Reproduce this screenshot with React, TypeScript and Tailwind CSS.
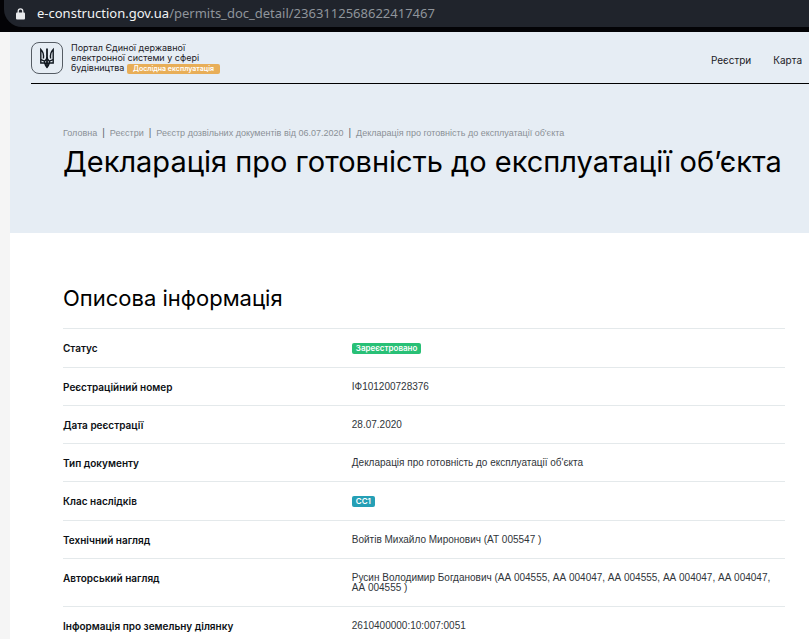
import type { ReactNode } from "react";

interface DetailRow {
  label: string;
  value: ReactNode;
}

interface BadgeProps {
  className: string;
  children: ReactNode;
}

const Badge: React.FC<BadgeProps> = ({ className, children }) => {
  return (
    <span className={`w-fit rounded-xs font-[Inter,sans-serif] text-white ${className}`}>
      {children}
    </span>
  );
};

const navigation = ["Реєстри", "Карта"];

const breadcrumbs = [
  "Головна",
  "Реєстри",
  "Реєстр дозвільних документів від 06.07.2020",
  "Декларація про готовність до експлуатації об'єкта",
];

const details: DetailRow[] = [
  {
    label: "Статус",
    value: <Badge className="block bg-[#28c076] px-1 text-[8px] leading-[11px] font-semibold">Зареєстровано</Badge>,
  },
  { label: "Реєстраційний номер", value: "ІФ101200728376" },
  { label: "Дата реєстрації", value: "28.07.2020" },
  { label: "Тип документу", value: "Декларація про готовність до експлуатації об'єкта" },
  {
    label: "Клас наслідків",
    value: <Badge className="block bg-[#259fb5] px-1 text-[8px] leading-[11px] font-semibold">СС1</Badge>,
  },
  { label: "Технічний нагляд", value: "Войтів Михайло Миронович (АТ 005547 )" },
  {
    label: "Авторський нагляд",
    value: "Русин Володимир Богданович (АА 004555, АА 004047, АА 004555, АА 004047, АА 004047, АА 004555 )",
  },
  { label: "Інформація про земельну ділянку", value: "2610400000:10:007:0051" },
];

const AddressBar: React.FC = () => {
  return (
    <div className="h-8 bg-[#030306] pl-1">
      <div className="flex h-[27px] items-center gap-3 rounded-bl-[18px] bg-[#20242c] pl-3 font-['Noto_Sans',sans-serif] text-[13px]">
        <svg className="h-3 w-[9px] shrink-0" viewBox="0 0 9 12" aria-hidden="true">
          <path d="M2.2 5V3.2a2.3 2.3 0 0 1 4.6 0V5" fill="none" stroke="#e8eaed" strokeWidth="1.3" />
          <rect y="4.4" width="9" height="7.2" rx="1" fill="#e8eaed" />
        </svg>
        <p className="whitespace-nowrap text-[#8f949b]">
          <span className="text-[#f1f3f4]">e-construction.gov.ua</span>
          /permits_doc_detail/2363112568622417467
        </p>
      </div>
    </div>
  );
};

const Trident: React.FC = () => {
  return (
    <svg className="h-[22px] w-4" viewBox="0 0 16 22" fill="none" stroke="#111820" strokeWidth="1.4" aria-hidden="true">
      <path d="M5.8 16H1.8V2.5C4.6 5.2 4.9 8 4.4 11.5M10.2 16h4V2.5c-2.8 2.7-3.1 5.5-2.6 9" />
      <path d="M8 1.5v19" strokeWidth="1.8" />
      <path d="M8 10c-.3 2.3-1.2 3.3-2.3 4.1-.5.7-.2 1.300 0 1.900.4 1.700 1.200 3 2.300 4.300 1.100-1.300 1.900-2.600 2.300-4.300.2-.6.5-1.200 0-1.900C9.200 13.300 8.300 12.300 8 10" />
      <path d="M1.8 12.6l3.9 1.5M14.2 12.6l-3.9 1.5M5.8 16.3h4.4" />
    </svg>
  );
};

const Header: React.FC = () => {
  return (
    <header className="ml-[21px] flex h-[52px] items-center justify-between border-b border-black pr-[7px]">
      <a href="#" className="flex items-center gap-2">
        <span className="flex size-8 shrink-0 items-center justify-center rounded-lg border border-[#555c64]">
          <Trident />
        </span>
        <span className="pt-0.5 text-[9px] leading-[10px] text-[#1b2026]">
          Портал Єдиної державної
          <br />
          електронної системи у сфері
          <br />
          будівництва{" "}
          <Badge className="inline-block bg-[#e8ae58] px-1.5 text-[7px] leading-[10px] font-semibold">
            Дослідна експлуатація
          </Badge>
        </span>
      </a>
      <nav className="flex gap-[22px] pt-1.5 text-[10px] text-[#1b2026]">
        {navigation.map((item) => (
          <a key={item} href="#">
            {item}
          </a>
        ))}
      </nav>
    </header>
  );
};

const DetailsTable: React.FC = () => {
  return (
    <table className="w-full table-fixed text-left text-[10px] leading-[10px]">
      <tbody>
        {details.map((row) => (
          <tr key={row.label} className="border-t border-[#e4e9eb] align-top">
            <th scope="row" className="w-2/5 pt-[14px] pb-[13px] font-semibold text-[#0c1014]">
              {row.label}
            </th>
            <td className="pt-[14px] pb-[13px] font-['Liberation_Sans',sans-serif] text-[#30353a]">{row.value}</td>
          </tr>
        ))}
      </tbody>
    </table>
  );
};

export default function App() {
  return (
    <div className="font-[Inter,'Liberation_Sans',sans-serif]">
      <AddressBar />
      <div className="bg-[#f5f5f5] pl-[10px]">
        <div className="bg-[#e6edf4] pb-[53px]">
          <Header />
          <div className="pt-[42px] pl-[53px]">
            <nav aria-label="breadcrumb">
              <ol className="flex font-['Liberation_Sans',sans-serif] text-[9px] leading-[14px] whitespace-nowrap text-[#8a9096]">
                {breadcrumbs.map((crumb, index) => (
                  <li key={crumb} className="flex">
                    {index > 0 && <span className="px-[5px] text-[10px] text-[#5f656b]">|</span>}
                    <a href="#">{crumb}</a>
                  </li>
                ))}
              </ol>
            </nav>
            <h1 className="mt-1 text-[29px] leading-9 whitespace-nowrap text-black">
              Декларація про готовність до експлуатації об’єкта
            </h1>
          </div>
        </div>
        <main className="bg-white pt-[51px] pr-6 pl-[53px]">
          <h2 className="mb-4 text-[22px] leading-7 text-black">Описова інформація</h2>
          <DetailsTable />
        </main>
      </div>
    </div>
  );
}
